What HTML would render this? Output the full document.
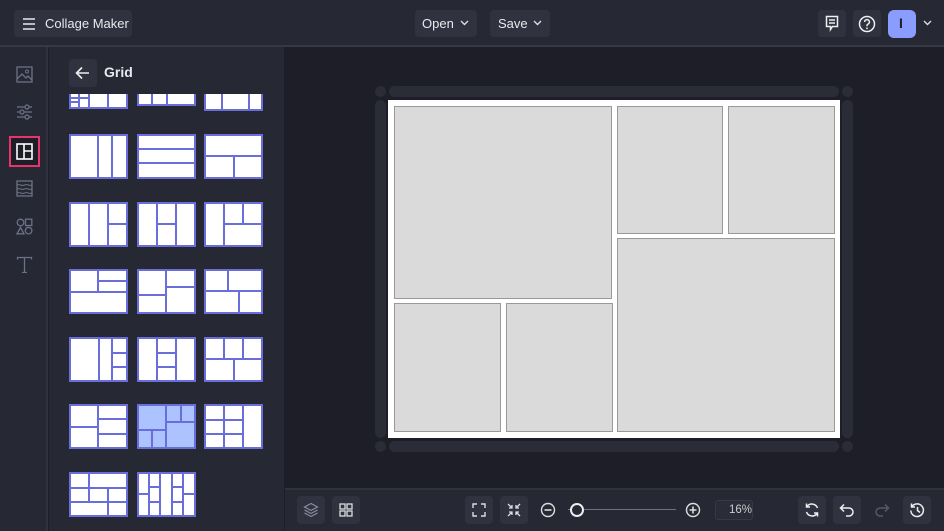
<!DOCTYPE html>
<html><head><meta charset="utf-8">
<style>
*{margin:0;padding:0;box-sizing:border-box}
body{width:944px;height:531px;overflow:hidden;background:#1d1e27;font-family:"Liberation Sans",sans-serif;color:#e8e9ef;position:relative}
.abs{position:absolute}
.btn{position:absolute;background:#30323f;border-radius:4px}
.top{left:0;top:0;width:944px;height:47px;background:#262834;border-bottom:2px solid #363846}
.rail{left:0;top:47px;width:48px;height:484px;background:#262834;border-right:2px solid #30323e}
.panel{left:49px;top:47px;width:235px;height:484px;background:#262834}
.bottom{left:285px;top:488px;width:659px;height:43px;background:#262834;border-top:2px solid #30323e}
.th{position:absolute;width:59px;height:45px}
svg{display:block}
.l{stroke:#6a6edb;stroke-width:2;fill:none}.b{fill:#fff;stroke:#6a6edb;stroke-width:2}
</style></head><body>
<div class="abs top"></div>
<div class="btn" style="left:14px;top:10px;width:118px;height:27px"></div>
<svg class="abs" style="left:21px;top:16px" width="16" height="16" viewBox="0 0 16 16"><path d="M2 3h12M2 8h12M2 13h12" stroke="#e8e9ef" stroke-width="1.6"/></svg>
<div class="abs" style="left:45px;top:16px;font-size:13px">Collage Maker</div>

<div class="btn" style="left:415px;top:10px;width:62px;height:27px"></div>
<div class="abs" style="left:422px;top:16px;font-size:13px">Open</div>
<svg class="abs" style="left:460px;top:20px" width="9" height="7"><path d="M1 1l3.5 3.5L8 1" stroke="#ddd" stroke-width="1.4" fill="none"/></svg>
<div class="btn" style="left:490px;top:10px;width:60px;height:27px"></div>
<div class="abs" style="left:498px;top:16px;font-size:13px">Save</div>
<svg class="abs" style="left:533px;top:20px" width="9" height="7"><path d="M1 1l3.5 3.5L8 1" stroke="#ddd" stroke-width="1.4" fill="none"/></svg>

<div class="btn" style="left:818px;top:10px;width:28px;height:27px"></div>
<svg class="abs" style="left:824px;top:15px" width="16" height="17" viewBox="0 0 16 17"><path d="M2.5 1.5h11v10h-5l-2 3v-3h-4z" stroke="#eee" stroke-width="1.5" fill="none"/><path d="M5 5h6M5 8h6" stroke="#eee" stroke-width="1.4"/></svg>
<div class="btn" style="left:853px;top:10px;width:28px;height:27px"></div>
<svg class="abs" style="left:858px;top:15px" width="18" height="18" viewBox="0 0 18 18"><circle cx="9" cy="9" r="7.5" stroke="#eee" stroke-width="1.5" fill="none"/><path d="M6.6 7a2.4 2.4 0 1 1 3.3 2.2c-.6.3-.9.7-.9 1.4v.6" stroke="#eee" stroke-width="1.5" fill="none"/><circle cx="9" cy="13.3" r=".9" fill="#eee"/></svg>
<div class="abs" style="left:888px;top:10px;width:28px;height:28px;background:#8b9cff;border-radius:6px"></div>
<div class="abs" style="left:899px;top:15px;font-size:14px;color:#1d1e27;font-weight:bold">I</div>
<svg class="abs" style="left:923px;top:20px" width="9" height="7"><path d="M1 1l3.5 3.5L8 1" stroke="#ddd" stroke-width="1.4" fill="none"/></svg>

<div class="abs rail"></div>
<svg class="abs" style="left:16px;top:66px" width="17" height="17" viewBox="0 0 17 17"><rect x="1" y="1" width="15" height="15" stroke="#6d7185" stroke-width="1.3" fill="none"/><circle cx="11" cy="5.5" r="1.5" stroke="#6d7185" fill="none"/><path d="M1 13l5-5 4 4 2-2 4 4" stroke="#6d7185" stroke-width="1.3" fill="none"/></svg>
<svg class="abs" style="left:16px;top:104px" width="17" height="16" viewBox="0 0 17 16"><path d="M1 3h15M1 8h15M1 13h15" stroke="#6d7185" stroke-width="1.3"/><circle cx="11" cy="3" r="2" fill="#262834" stroke="#6d7185" stroke-width="1.2"/><circle cx="6" cy="8" r="2" fill="#262834" stroke="#6d7185" stroke-width="1.2"/><circle cx="11" cy="13" r="2" fill="#262834" stroke="#6d7185" stroke-width="1.2"/></svg>
<div class="abs" style="left:9px;top:136px;width:31px;height:31px;border:2px solid #e8336b;background:#1d1e27"></div>
<svg class="abs" style="left:16px;top:143px" width="17" height="17" viewBox="0 0 17 17"><rect x="1" y="1" width="15" height="15" stroke="#fff" stroke-width="1.6" fill="none"/><path d="M8 1v15M8 8h8" stroke="#fff" stroke-width="1.6"/></svg>
<svg class="abs" style="left:16px;top:180px" width="17" height="17" viewBox="0 0 17 17"><rect x="1" y="1" width="15" height="15" stroke="#6d7185" stroke-width="1.3" fill="none"/><path d="M1 5c3-1.5 4 1.5 7.5 0s4 1.5 7.5 0M1 9c3-1.5 4 1.5 7.5 0s4 1.5 7.5 0M1 13c3-1.5 4 1.5 7.5 0s4 1.5 7.5 0" stroke="#6d7185" stroke-width="1.1" fill="none"/></svg>
<svg class="abs" style="left:16px;top:218px" width="17" height="17" viewBox="0 0 17 17"><circle cx="4.5" cy="4.5" r="3.3" stroke="#6d7185" stroke-width="1.3" fill="none"/><rect x="9.5" y="1.2" width="6.3" height="6.3" stroke="#6d7185" stroke-width="1.3" fill="none"/><path d="M4.5 9.5l3.5 6.3H1z" stroke="#6d7185" stroke-width="1.3" fill="none"/><circle cx="12.6" cy="12.6" r="3.3" stroke="#6d7185" stroke-width="1.3" fill="none"/></svg>
<svg class="abs" style="left:16px;top:256px" width="17" height="17" viewBox="0 0 17 17"><path d="M1.5 3.5V1.5h14v2M8.5 1.5v15M6 16.5h5" stroke="#6d7185" stroke-width="1.3" fill="none"/></svg>

<div class="abs panel"></div>
<div class="btn" style="left:69px;top:59px;width:28px;height:28px"></div>
<svg class="abs" style="left:75px;top:66px" width="15" height="14" viewBox="0 0 15 14"><path d="M14 7H2M7 1.5L1.5 7 7 12.5" stroke="#eee" stroke-width="1.6" fill="none"/></svg>
<div class="abs" style="left:104px;top:64px;font-size:14px;font-weight:bold">Grid</div>

<div class="abs" style="left:60px;top:94px;width:215px;height:437px;overflow:hidden">
<div style="position:relative;left:-60px;top:-94px">
<svg class="th" style="left:69px;top:89px;height:20px" viewBox="0 0 59 20"><rect x="1" y="1" width="57" height="18" fill="#fff" stroke="#6a6edb" stroke-width="2"/><path d="M10 1v18M20 1v18M39 1v18M1 9h19M1 13h9" stroke="#6a6edb" stroke-width="2"/></svg>
<svg class="th" style="left:137px;top:89px;height:17px" viewBox="0 0 59 17"><rect x="1" y="1" width="57" height="15" fill="#fff" stroke="#6a6edb" stroke-width="2"/><path d="M15 1v15M30 1v15" stroke="#6a6edb" stroke-width="2"/></svg>
<svg class="th" style="left:204px;top:89px;height:22px" viewBox="0 0 59 22"><rect x="1" y="1" width="57" height="20" fill="#fff" stroke="#6a6edb" stroke-width="2"/><path d="M18 1v20M45 1v20" stroke="#6a6edb" stroke-width="2"/></svg>
</div></div>

<svg class="th" style="left:69px;top:134px" viewBox="0 0 59 45"><rect class="b" x="1" y="1" width="57" height="43"/><path class="l" d="M29 1v43M43 1v43"/></svg>
<svg class="th" style="left:137px;top:134px" viewBox="0 0 59 45"><rect class="b" x="1" y="1" width="57" height="43"/><path class="l" d="M1 15h57M1 29h57"/></svg>
<svg class="th" style="left:204px;top:134px" viewBox="0 0 59 45"><rect class="b" x="1" y="1" width="57" height="43"/><path class="l" d="M1 22h57M30 22v22"/></svg>
<svg class="th" style="left:69px;top:202px" viewBox="0 0 59 45"><rect class="b" x="1" y="1" width="57" height="43"/><path class="l" d="M20 1v43M39 1v43M39 22h19"/></svg>
<svg class="th" style="left:137px;top:202px" viewBox="0 0 59 45"><rect class="b" x="1" y="1" width="57" height="43"/><path class="l" d="M20 1v43M39 1v43M20 22h19"/></svg>
<svg class="th" style="left:204px;top:202px" viewBox="0 0 59 45"><rect class="b" x="1" y="1" width="57" height="43"/><path class="l" d="M20 1v43M20 22h38M39 1v21"/></svg>
<svg class="th" style="left:69px;top:269px" viewBox="0 0 59 45"><rect class="b" x="1" y="1" width="57" height="43"/><path class="l" d="M1 23h57M29 1v22M29 12h29"/></svg>
<svg class="th" style="left:137px;top:269px" viewBox="0 0 59 45"><rect class="b" x="1" y="1" width="57" height="43"/><path class="l" d="M29 1v43M1 26h28M29 18h29"/></svg>
<svg class="th" style="left:204px;top:269px" viewBox="0 0 59 45"><rect class="b" x="1" y="1" width="57" height="43"/><path class="l" d="M1 22h57M24 1v21M35 22v22"/></svg>
<svg class="th" style="left:69px;top:337px" viewBox="0 0 59 45"><rect class="b" x="1" y="1" width="57" height="43"/><path class="l" d="M30 1v43M43 1v43M43 16h15M43 30h15"/></svg>
<svg class="th" style="left:137px;top:337px" viewBox="0 0 59 45"><rect class="b" x="1" y="1" width="57" height="43"/><path class="l" d="M20 1v43M39 1v43M20 16h19M20 30h19"/></svg>
<svg class="th" style="left:204px;top:337px" viewBox="0 0 59 45"><rect class="b" x="1" y="1" width="57" height="43"/><path class="l" d="M1 22h57M20 1v21M39 1v21M30 22v22"/></svg>
<svg class="th" style="left:69px;top:404px" viewBox="0 0 59 45"><rect class="b" x="1" y="1" width="57" height="43"/><path class="l" d="M29 1v43M1 23h28M29 15h29M29 30h29"/></svg>
<svg class="th" style="left:137px;top:404px" viewBox="0 0 59 45"><rect x="1" y="1" width="57" height="43" fill="#adc3ff" stroke="#6a6edb" stroke-width="2"/><path class="l" d="M29 1v43M1 26h28M15 26v18M29 18h29M44 1v17"/></svg>
<svg class="th" style="left:204px;top:404px" viewBox="0 0 59 45"><rect class="b" x="1" y="1" width="57" height="43"/><path class="l" d="M20 1v43M39 1v43M1 16h38M1 30h38"/></svg>
<svg class="th" style="left:69px;top:472px" viewBox="0 0 59 45"><rect class="b" x="1" y="1" width="57" height="43"/><path class="l" d="M1 16h57M1 30h57M20 1v29M39 16v28"/></svg>
<svg class="th" style="left:137px;top:472px" viewBox="0 0 59 45"><rect class="b" x="1" y="1" width="57" height="43"/><path class="l" d="M12 1v43M23 1v43M35 1v43M46 1v43M1 22h11M12 15h11M12 30h11M35 15h11M35 30h11M46 22h12"/></svg>

<div class="abs" style="left:375px;top:86px;width:478px;height:366px">
<div class="abs" style="left:14px;top:0;width:450px;height:11px;background:#2a2c37;border-radius:6px"></div>
<div class="abs" style="left:14px;top:355px;width:450px;height:11px;background:#2a2c37;border-radius:6px"></div>
<div class="abs" style="left:0;top:14px;width:11px;height:338px;background:#2a2c37;border-radius:6px"></div>
<div class="abs" style="left:467px;top:14px;width:11px;height:338px;background:#2a2c37;border-radius:6px"></div>
<div class="abs" style="left:0;top:0;width:11px;height:11px;background:#2a2c37;border-radius:50%"></div>
<div class="abs" style="left:467px;top:0;width:11px;height:11px;background:#2a2c37;border-radius:50%"></div>
<div class="abs" style="left:0;top:355px;width:11px;height:11px;background:#2a2c37;border-radius:50%"></div>
<div class="abs" style="left:467px;top:355px;width:11px;height:11px;background:#2a2c37;border-radius:50%"></div>
</div>
<div class="abs" style="left:388px;top:100px;width:452px;height:338px;background:#fff"></div>
<div class="abs" style="left:394px;top:106px;width:218px;height:193px;background:#dadada;border:1px solid #999"></div>
<div class="abs" style="left:617px;top:106px;width:106px;height:128px;background:#dadada;border:1px solid #999"></div>
<div class="abs" style="left:728px;top:106px;width:107px;height:128px;background:#dadada;border:1px solid #999"></div>
<div class="abs" style="left:394px;top:303px;width:107px;height:129px;background:#dadada;border:1px solid #999"></div>
<div class="abs" style="left:506px;top:303px;width:107px;height:129px;background:#dadada;border:1px solid #999"></div>
<div class="abs" style="left:617px;top:238px;width:218px;height:194px;background:#dadada;border:1px solid #999"></div>

<div class="abs bottom"></div>
<div class="btn" style="left:297px;top:496px;width:28px;height:28px"></div>
<svg class="abs" style="left:303px;top:502px" width="16" height="16" viewBox="0 0 16 16"><path d="M8 1.5l6.5 3.5L8 8.5 1.5 5z" stroke="#8a8da0" stroke-width="1.2" fill="none"/><path d="M1.5 8L8 11.5 14.5 8M1.5 11L8 14.5 14.5 11" stroke="#8a8da0" stroke-width="1.2" fill="none"/></svg>
<div class="btn" style="left:332px;top:496px;width:28px;height:28px"></div>
<svg class="abs" style="left:339px;top:503px" width="14" height="14" viewBox="0 0 14 14"><rect x="1" y="1" width="5" height="5" stroke="#ddd" stroke-width="1.3" fill="none"/><rect x="8" y="1" width="5" height="5" stroke="#ddd" stroke-width="1.3" fill="none"/><rect x="1" y="8" width="5" height="5" stroke="#ddd" stroke-width="1.3" fill="none"/><rect x="8" y="8" width="5" height="5" stroke="#ddd" stroke-width="1.3" fill="none"/></svg>
<div class="btn" style="left:465px;top:496px;width:28px;height:28px"></div>
<svg class="abs" style="left:472px;top:503px" width="14" height="14" viewBox="0 0 14 14"><path d="M1 5V1h4M9 1h4v4M13 9v4H9M5 13H1V9" stroke="#ddd" stroke-width="1.4" fill="none"/></svg>
<div class="btn" style="left:500px;top:496px;width:28px;height:28px"></div>
<svg class="abs" style="left:507px;top:503px" width="14" height="14" viewBox="0 0 14 14"><path d="M1 1l4 4M5 2v3H2M13 1L9 5M9 2v3h3M1 13l4-4M2 9h3v3M13 13L9 9M12 9H9v3" stroke="#ddd" stroke-width="1.3" fill="none"/></svg>
<svg class="abs" style="left:540px;top:502px" width="16" height="16" viewBox="0 0 16 16"><circle cx="8" cy="8" r="6.5" stroke="#ddd" stroke-width="1.4" fill="none"/><path d="M4.5 8h7" stroke="#ddd" stroke-width="1.6"/></svg>
<div class="abs" style="left:568px;top:509px;width:108px;height:1px;background:#6d7080"></div>
<div class="abs" style="left:570px;top:503px;width:14px;height:14px;border:2px solid #eee;border-radius:50%;background:#262834"></div>
<svg class="abs" style="left:685px;top:502px" width="16" height="16" viewBox="0 0 16 16"><circle cx="8" cy="8" r="6.5" stroke="#ddd" stroke-width="1.4" fill="none"/><path d="M4.5 8h7M8 4.5v7" stroke="#ddd" stroke-width="1.6"/></svg>
<div class="abs" style="left:715px;top:500px;width:38px;height:20px;background:#2a2c38;border:1px solid #363846;border-radius:3px"></div>
<div class="abs" style="left:729px;top:504px;font-size:11.5px;color:#ccc">16%</div>

<div class="btn" style="left:798px;top:496px;width:28px;height:28px"></div>
<svg class="abs" style="left:804px;top:502px" width="16" height="16" viewBox="0 0 16 16"><path d="M13.5 6A6 6 0 0 0 3 4.5M2.5 10A6 6 0 0 0 13 11.5" stroke="#eee" stroke-width="1.5" fill="none"/><path d="M2.5 1.5v3.5H6M13.5 14.5V11H10" stroke="#eee" stroke-width="1.5" fill="none"/></svg>
<div class="btn" style="left:833px;top:496px;width:28px;height:28px"></div>
<svg class="abs" style="left:839px;top:503px" width="16" height="14" viewBox="0 0 16 14"><path d="M5 1.5L1.5 5 5 8.5M1.5 5h8.5a4 4 0 0 1 0 8H7" stroke="#eee" stroke-width="1.5" fill="none"/></svg>
<div class="btn" style="left:868px;top:496px;width:28px;height:28px;background:#262834"></div>
<svg class="abs" style="left:874px;top:503px" width="16" height="14" viewBox="0 0 16 14"><path d="M11 1.5L14.5 5 11 8.5M14.5 5H6a4 4 0 0 0 0 8h3" stroke="#555868" stroke-width="1.5" fill="none"/></svg>
<div class="btn" style="left:903px;top:496px;width:28px;height:28px"></div>
<svg class="abs" style="left:909px;top:502px" width="16" height="16" viewBox="0 0 16 16"><path d="M3 4.5A6.3 6.3 0 1 1 1.8 8.5" stroke="#eee" stroke-width="1.5" fill="none"/><path d="M2.5 1.5v3.5H6M8.5 5v3.5l2.5 2" stroke="#eee" stroke-width="1.5" fill="none"/></svg>
</body></html>
